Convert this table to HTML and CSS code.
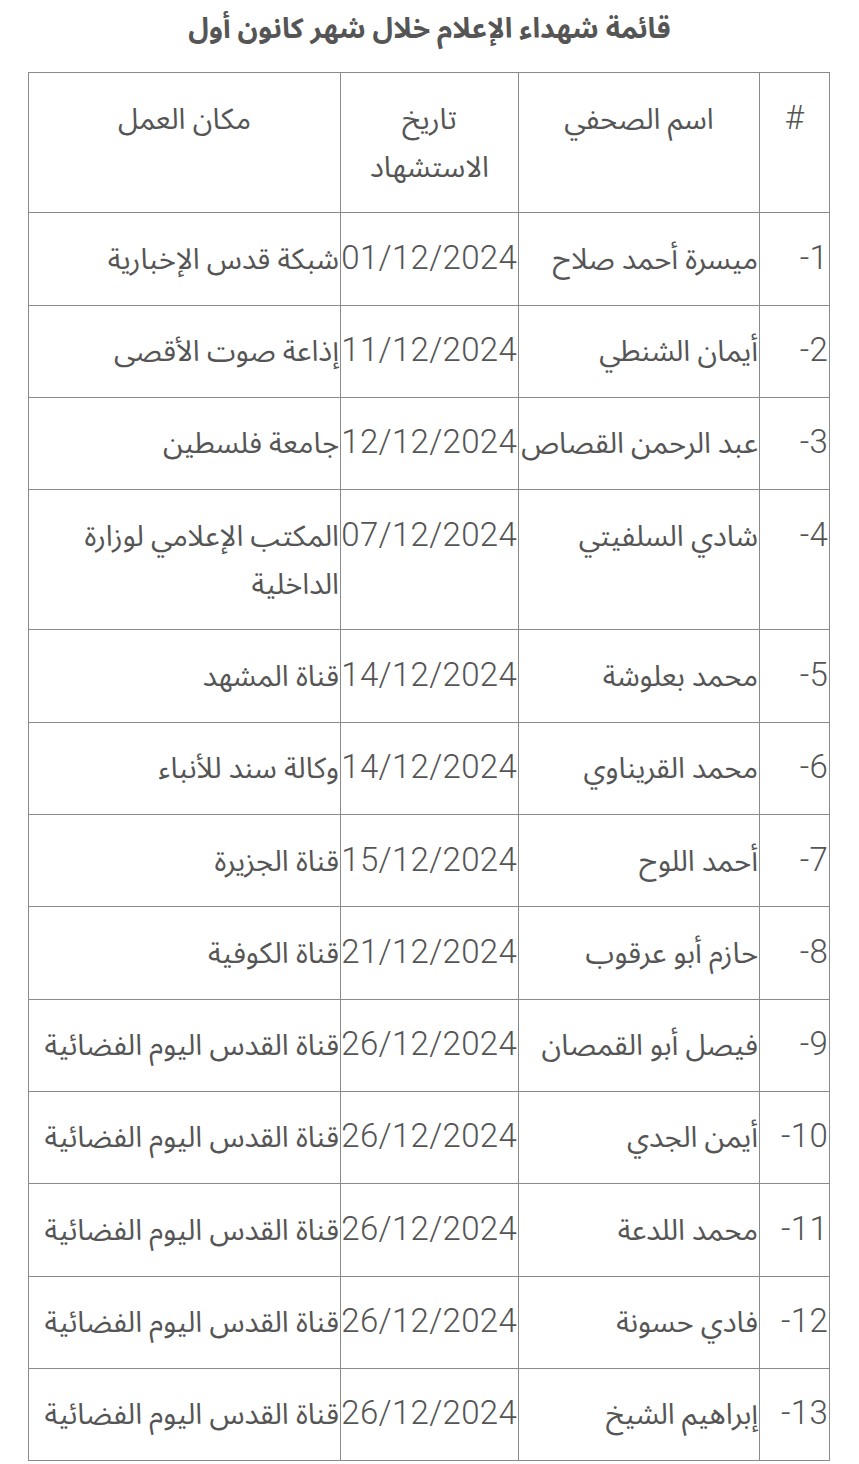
FILE: index.html
```html
<!DOCTYPE html>
<html lang="ar" dir="rtl">
<head>
<meta charset="utf-8">
<link rel="stylesheet" href="styles.css">
</head>
<body>
<div class="page">
  <h1 class="title">قائمة شهداء الإعلام خلال شهر كانون أول</h1>
  <table class="list">
    <colgroup>
      <col class="c-num"><col class="c-name"><col class="c-date"><col class="c-place">
    </colgroup>
    <thead>
      <tr><th><span class="num">#</span></th><th>اسم الصحفي</th><th>تاريخ الاستشهاد</th><th>مكان العمل</th></tr>
    </thead>
    <tbody>
      <tr><td><span class="num">1-</span></td><td>ميسرة أحمد صلاح</td><td class="date"><span class="num">01/12/2024</span></td><td>شبكة قدس الإخبارية</td></tr>
      <tr><td><span class="num">2-</span></td><td>أيمان الشنطي</td><td class="date"><span class="num">11/12/2024</span></td><td>إذاعة صوت الأقصى</td></tr>
      <tr><td><span class="num">3-</span></td><td>عبد الرحمن القصاص</td><td class="date"><span class="num">12/12/2024</span></td><td>جامعة فلسطين</td></tr>
      <tr><td><span class="num">4-</span></td><td>شادي السلفيتي</td><td class="date"><span class="num">07/12/2024</span></td><td>المكتب الإعلامي لوزارة الداخلية</td></tr>
      <tr><td><span class="num">5-</span></td><td>محمد بعلوشة</td><td class="date"><span class="num">14/12/2024</span></td><td>قناة المشهد</td></tr>
      <tr><td><span class="num">6-</span></td><td>محمد القريناوي</td><td class="date"><span class="num">14/12/2024</span></td><td>وكالة سند للأنباء</td></tr>
      <tr><td><span class="num">7-</span></td><td>أحمد اللوح</td><td class="date"><span class="num">15/12/2024</span></td><td>قناة الجزيرة</td></tr>
      <tr><td><span class="num">8-</span></td><td>حازم أبو عرقوب</td><td class="date"><span class="num">21/12/2024</span></td><td>قناة الكوفية</td></tr>
      <tr><td><span class="num">9-</span></td><td>فيصل أبو القمصان</td><td class="date"><span class="num">26/12/2024</span></td><td>قناة القدس اليوم الفضائية</td></tr>
      <tr><td><span class="num">10-</span></td><td>أيمن الجدي</td><td class="date"><span class="num">26/12/2024</span></td><td>قناة القدس اليوم الفضائية</td></tr>
      <tr><td><span class="num">11-</span></td><td>محمد اللدعة</td><td class="date"><span class="num">26/12/2024</span></td><td>قناة القدس اليوم الفضائية</td></tr>
      <tr><td><span class="num">12-</span></td><td>فادي حسونة</td><td class="date"><span class="num">26/12/2024</span></td><td>قناة القدس اليوم الفضائية</td></tr>
      <tr><td><span class="num">13-</span></td><td>إبراهيم الشيخ</td><td class="date"><span class="num">26/12/2024</span></td><td>قناة القدس اليوم الفضائية</td></tr>
    </tbody>
  </table>
</div>
</body>
</html>
```
FILE: styles.css
```css
html, body {
  margin: 0;
  padding: 0;
  background: #ffffff;
}
body {
  font-family: Roboto, "Noto Sans Arabic", "Noto Naskh Arabic", "DejaVu Sans", sans-serif;
  color: #555555;
}
.page {
  width: 801px;
  margin: 0 auto;
}
.title {
  margin: 8px 0 22px;
  font-size: 28px;
  line-height: 42px;
  font-weight: bold;
  text-align: center;
  color: #555555;
}
.list {
  width: 801px;
  border-collapse: collapse;
  table-layout: fixed;
  font-size: 29px;
  line-height: 48px;
}
.c-num { width: 70px; }
.c-name { width: 241px; }
.c-date { width: 178px; }
.c-place { width: 312px; }
.list th,
.list td {
  border: 1px solid #8a8a8a;
  padding: 21.5px 1px 21.8px;
  vertical-align: top;
  text-align: right;
  font-weight: normal;
}
.list th {
  text-align: center;
}
.num {
  font-size: 33px;
  line-height: 1;
  letter-spacing: 0.3px;
  font-family: Roboto, sans-serif;
  font-weight: 300;
}
.list td.date {
  white-space: nowrap;
  padding-left: 0;
  padding-right: 1px;
}
```
